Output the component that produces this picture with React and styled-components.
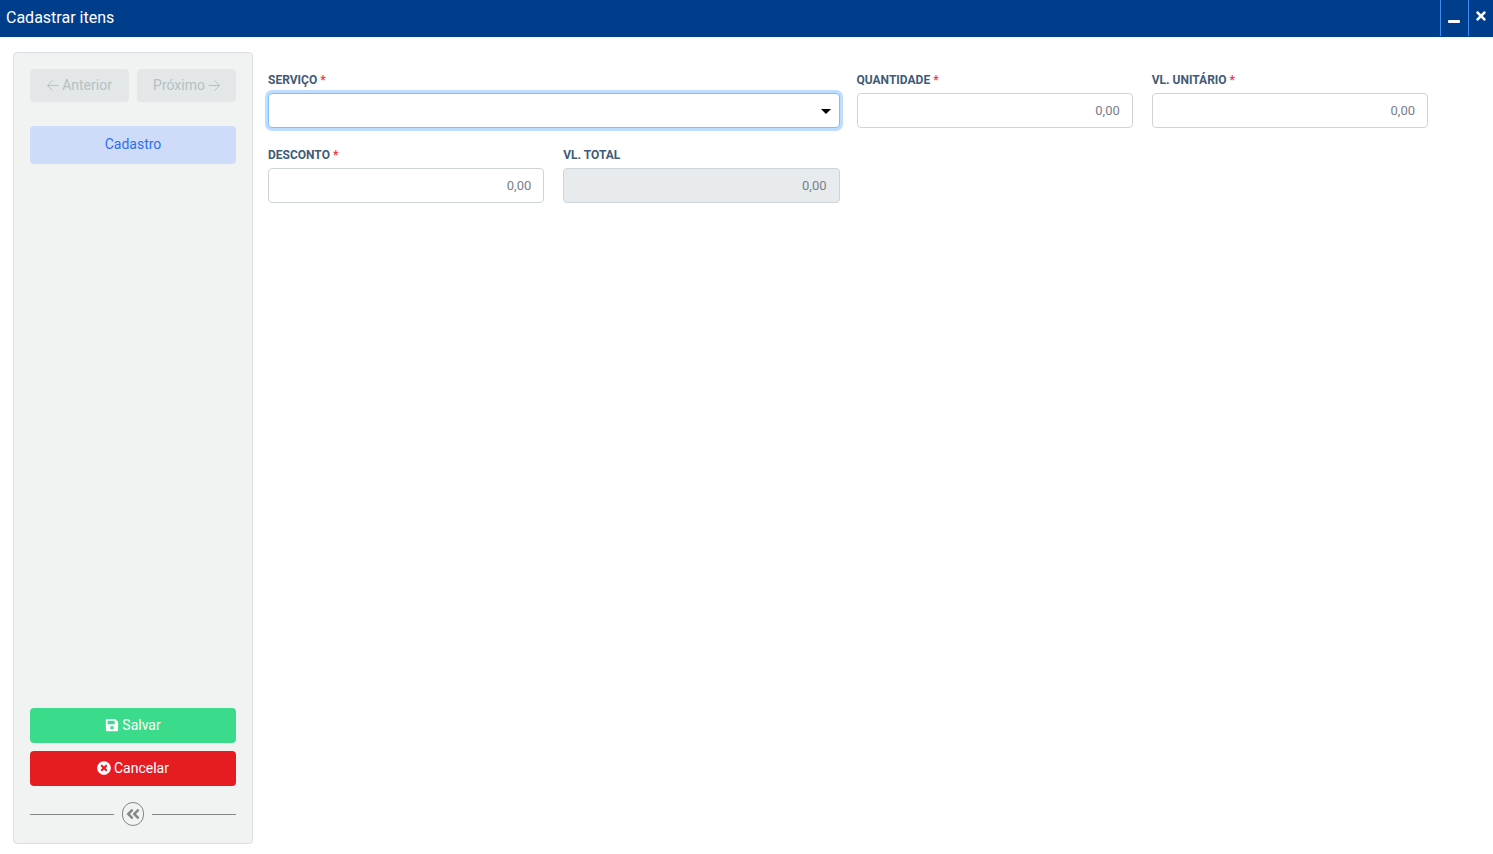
import React from "react";
import styled, { createGlobalStyle } from "styled-components";
import {
  FaAngleDoubleLeft,
  FaSave,
  FaTimes,
  FaTimesCircle,
} from "react-icons/fa";

const GlobalStyle = createGlobalStyle`
  *, *::before, *::after { box-sizing: border-box; }
  body {
    margin: 0;
    background: #fff;
    font-family: Roboto, "Liberation Sans", sans-serif;
    font-size: 14px;
    line-height: 21px;
  }
  button, input, select { font: inherit; margin: 0; }
`;

const Window = styled.div`
  display: flex;
  flex-direction: column;
  min-height: 100vh;
`;

const TitleBar = styled.header`
  display: flex;
  justify-content: space-between;
  height: 37px;
  padding-bottom: 1px;
  background: #003e8c;
  color: #fff;
`;

const Title = styled.h1`
  margin: 0;
  padding-left: 6px;
  font-size: 16px;
  font-weight: 400;
  line-height: 35px;
`;

const WindowActions = styled.div`
  display: flex;
`;

const WindowButton = styled.button`
  display: flex;
  align-items: center;
  justify-content: center;
  width: ${({ $width }) => $width}px;
  padding: 0 0 4px;
  border: 0;
  border-left: 1px solid #3c8ff0;
  background: none;
  color: #fff;
  cursor: pointer;
`;

const Content = styled.div`
  display: flex;
  flex: 1;
  gap: 15px;
  padding: 15px 65px 10px 13px;
`;

const Sidebar = styled.aside`
  display: flex;
  flex-direction: column;
  justify-content: space-between;
  flex: 0 0 240px;
  padding: 16px 16px 17px;
  border: 1px solid #d9dfe4;
  border-radius: 4px;
  background: #f1f3f3;
`;

const Stack = styled.div`
  display: flex;
  flex-direction: column;
  gap: ${({ $gap }) => $gap}px;
`;

const StepNav = styled.div`
  display: grid;
  grid-template-columns: 1fr 1fr;
  gap: 8px;
`;

const Button = styled.button`
  display: flex;
  align-items: center;
  justify-content: center;
  gap: 3px;
  width: 100%;
  height: 35px;
  padding: 0;
  border: 0;
  border-radius: 4px;
  color: #fff;
  background: ${({ $color }) => $color};
  cursor: pointer;
  svg { margin-bottom: 2px; }
`;

const StepButton = styled(Button)`
  height: 33px;
  background: #e3e7e8;
  color: #b5c1c2;
  cursor: default;
  svg { margin-bottom: 0; }
`;

const StepLink = styled.a`
  display: block;
  height: 38px;
  border-radius: 4px;
  background: #cedcfa;
  color: #2f6fed;
  line-height: 36px;
  text-align: center;
  text-decoration: none;
`;

const Collapse = styled.div`
  display: flex;
  align-items: center;
  gap: 8px;
  padding-top: 8px;
  &::before, &::after {
    content: "";
    flex: 1;
    height: 1px;
    background: #858686;
  }
`;

const CollapseButton = styled.button`
  display: flex;
  align-items: center;
  justify-content: center;
  width: 22px;
  height: 24px;
  padding: 0;
  border: 1px solid #858686;
  border-radius: 12px;
  background: none;
  color: #858686;
  cursor: pointer;
`;

const Form = styled.form`
  display: grid;
  grid-template-columns: 1fr 1fr;
  align-content: start;
  gap: 16px 17px;
  flex: 1;
  padding-top: 17px;
`;

const FieldPair = styled.div`
  display: grid;
  grid-template-columns: 1fr 1fr;
  gap: 19px;
`;

const FieldBox = styled.div`
  display: flex;
  flex-direction: column;
  gap: 1px;
  min-width: 0;
`;

const Label = styled.label`
  height: 23px;
  color: #3f5b78;
  font-size: 12px;
  font-weight: 700;
  line-height: 23px;
`;

const Required = styled.span`
  color: #f03a42;
`;

const Input = styled.input`
  width: 100%;
  height: 35px;
  padding: 0 12px;
  border: 1px solid #ced4da;
  border-radius: 4px;
  background: #fff;
  color: #77808c;
  font-size: 13px;
  text-align: right;
  &::placeholder { color: #77808c; opacity: 1; }
  &:disabled { background: #e8ebee; }
`;

const SelectWrap = styled.div`
  position: relative;
`;

const Select = styled.select`
  display: block;
  width: 100%;
  height: 35px;
  padding: 0 30px 0 12px;
  appearance: none;
  border: 1px solid #80bdff;
  border-radius: 4px;
  outline: 0;
  background: #fff;
  box-shadow: 0 0 0 3px #bfdeff;
`;

const Caret = styled.svg`
  position: absolute;
  top: 16px;
  right: 9px;
  pointer-events: none;
`;

function Arrow({ right }) {
  return (
    <svg width="12" height="12" viewBox="0 0 12 12" fill="none" stroke="currentColor" aria-hidden="true">
      <path d={right ? "M.5 5.5h11M6.5 .5l5 5-5 5" : "M11.5 5.5H.5M5.5 .5l-5 5 5 5"} />
    </svg>
  );
}

function FieldLabel({ id, required, children }) {
  return (
    <Label htmlFor={id}>
      {children}
      {required && <Required> *</Required>}
    </Label>
  );
}

function NumberField({ id, label, required, disabled }) {
  return (
    <FieldBox>
      <FieldLabel id={id} required={required}>{label}</FieldLabel>
      <Input id={id} type="text" inputMode="decimal" placeholder="0,00" disabled={disabled} />
    </FieldBox>
  );
}

export default function App() {
  return (
    <>
      <GlobalStyle />
      <Window>
        <TitleBar>
          <Title>Cadastrar itens</Title>
          <WindowActions>
            <WindowButton type="button" $width={28} aria-label="Minimizar">
              <svg width="13" height="14" viewBox="0 0 13 14" aria-hidden="true">
                <rect y="11" width="12" height="3" rx="1" fill="currentColor" />
              </svg>
            </WindowButton>
            <WindowButton type="button" $width={25} aria-label="Fechar">
              <FaTimes size={14} />
            </WindowButton>
          </WindowActions>
        </TitleBar>
        <Content>
          <Sidebar>
            <Stack $gap={24}>
              <StepNav>
                <StepButton type="button" disabled><Arrow /> Anterior</StepButton>
                <StepButton type="button" disabled>Próximo <Arrow right /></StepButton>
              </StepNav>
              <StepLink href="#cadastro">Cadastro</StepLink>
            </Stack>
            <Stack $gap={8}>
              <Button type="submit" form="item" $color="#3adb8b"><FaSave size={14} /> Salvar</Button>
              <Button type="button" $color="#e61c23"><FaTimesCircle size={14} /> Cancelar</Button>
              <Collapse>
                <CollapseButton type="button" aria-label="Recolher menu">
                  <FaAngleDoubleLeft size={16} />
                </CollapseButton>
              </Collapse>
            </Stack>
          </Sidebar>
          <Form id="item">
            <FieldBox>
              <FieldLabel id="servico" required>SERVIÇO</FieldLabel>
              <SelectWrap>
                <Select id="servico" defaultValue="">
                  <option value="" />
                </Select>
                <Caret width="10" height="5" viewBox="0 0 10 5" aria-hidden="true">
                  <path d="M0 0h10L5 5z" />
                </Caret>
              </SelectWrap>
            </FieldBox>
            <FieldPair>
              <NumberField id="quantidade" label="QUANTIDADE" required />
              <NumberField id="unitario" label="VL. UNITÁRIO" required />
            </FieldPair>
            <FieldPair>
              <NumberField id="desconto" label="DESCONTO" required />
              <NumberField id="total" label="VL. TOTAL" disabled />
            </FieldPair>
          </Form>
        </Content>
      </Window>
    </>
  );
}
